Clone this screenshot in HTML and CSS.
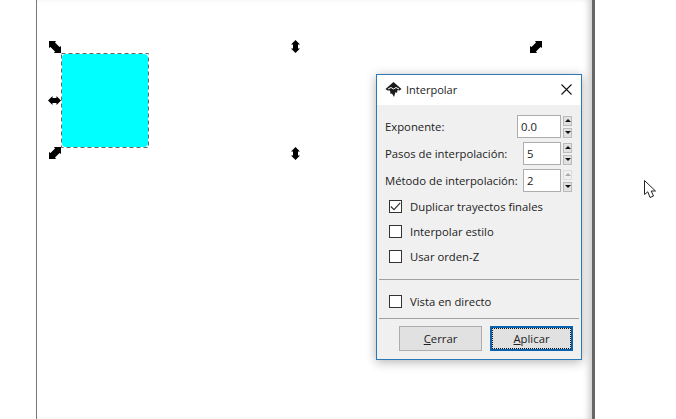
FILE: index.html
```html
<!DOCTYPE html>
<html lang="es">
<head>
    <meta charset="UTF-8">
    <meta name="viewport" content="width=device-width, initial-scale=1.0">
    <title>Interpolar</title>
    <link rel="stylesheet" href="styles.css">
</head>
<body>
    <main class="canvas">
        <div class="page"></div>

        <!-- Objeto seleccionado y tiradores -->
        <svg class="shape" width="88" height="95" viewBox="0 0 88 95">
            <rect class="shape-fill" x="1" y="1" width="86" height="93" rx="4"/>
            <rect class="shape-dash" x=".5" y=".5" width="87" height="94"/>
        </svg>
        <svg class="handle h-nw" width="12" height="12" viewBox="0 0 12 12"><path d="M0 0H7L6 1.500 10.500 6 12 5V12H5L6 10.500 1.500 6 0 7z"/></svg>
        <svg class="handle h-sw" width="12" height="12" viewBox="0 0 12 12"><path d="M12 0V7L10.500 6 6 10.500 7 12H0V5L1.500 6 6 1.500 5 0z"/></svg>
        <svg class="handle h-ne" width="12" height="12" viewBox="0 0 12 12"><path d="M12 0V7L10.500 6 6 10.500 7 12H0V5L1.500 6 6 1.500 5 0z"/></svg>
        <svg class="handle h-w" width="13" height="9" viewBox="0 0 13 9"><path d="M0 4.500 4.500 0V2H8.500V0L13 4.500 8.500 9V7H4.500V9z"/></svg>
        <svg class="handle h-n" width="9" height="13" viewBox="0 0 9 13"><path d="M4.500 0 9 4.500H7V8.500H9L4.500 13 0 8.500H2V4.500H0z"/></svg>
        <svg class="handle h-s" width="9" height="13" viewBox="0 0 9 13"><path d="M4.500 0 9 4.500H7V8.500H9L4.500 13 0 8.500H2V4.500H0z"/></svg>

        <!-- Puntero del ratón -->
        <svg class="cursor" width="13" height="19" viewBox="0 0 13 19"><path d="M.5 .5V14.500L3.800 11.800 6 17.500 9.500 16 7.200 11H11.500z"/></svg>

        <!-- Diálogo -->
        <section class="dialog">
            <header class="titlebar">
                <svg class="app-icon" width="17" height="15" viewBox="0 0 17 15">
                    <path class="ink" d="M8.500 0 16.500 7 14.500 8.500 12.500 8 12 11 10.500 10 9 15 7 11.500 5.500 12 5 8.500 2.500 8.500 .5 7z"/>
                    <path class="snow" d="M3 7 6 5.500 8.500 7 11 5.500 14 7"/>
                </svg>
                <span class="title">Interpolar</span>
                <svg class="close" width="11" height="11" viewBox="0 0 11 11"><path d="M.5 .5 10.500 10.500M10.500 .5 .5 10.500"/></svg>
            </header>
            <div class="body">
                <div class="field">
                    <label>Exponente:</label>
                    <div class="spin">
                        <input class="entry wide" type="text" value="0.0">
                        <div class="arrows">
                            <span class="arrow up"></span>
                            <span class="arrow down"></span>
                        </div>
                    </div>
                </div>
                <div class="field">
                    <label>Pasos de interpolación:</label>
                    <div class="spin">
                        <input class="entry" type="text" value="5">
                        <div class="arrows">
                            <span class="arrow up"></span>
                            <span class="arrow down"></span>
                        </div>
                    </div>
                </div>
                <div class="field">
                    <label>Método de interpolación:</label>
                    <div class="spin">
                        <input class="entry" type="text" value="2">
                        <div class="arrows">
                            <span class="arrow up off"></span>
                            <span class="arrow down"></span>
                        </div>
                    </div>
                </div>

                <div class="check first">
                    <span class="box"><svg width="11" height="9" viewBox="0 0 11 9"><path d="M.8 4.500 4 7.600 10.200 .8"/></svg></span>
                    <span>Duplicar trayectos finales</span>
                </div>
                <div class="check"><span class="box"></span><span>Interpolar estilo</span></div>
                <div class="check"><span class="box"></span><span>Usar orden-Z</span></div>

                <hr class="rule rule-top">
                <div class="check live"><span class="box"></span><span>Vista en directo</span></div>
                <hr class="rule rule-bottom">

                <div class="buttons">
                    <button class="btn" type="button"><u>C</u>errar</button>
                    <button class="btn default" type="button"><u>A</u>plicar</button>
                </div>
            </div>
        </section>
    </main>
</body>
</html>
```

FILE: styles.css
```css
html, body {
    margin: 0;
    padding: 0;
    height: 100%;
    background-color: #fff;
    overflow: hidden;
}
.canvas {
    position: relative;
    width: 676px;
    height: 419px;
    font-family: "Open Sans", "Noto Sans", sans-serif;
    color: #222;
}
.page {
    position: absolute;
    left: 36px;
    top: 0;
    width: 555px;
    height: 419px;
    border-left: 1px solid #777;
    border-right: 3px solid #666;
    box-shadow: inset -6px 0 6px -3px #ccc;
}
.shape {
    position: absolute;
    left: 61px;
    top: 53px;
}
.shape-fill {
    fill: #0ff;
}
.shape-dash {
    fill: none;
    stroke: #666;
    stroke-width: 1;
    stroke-dasharray: 4 3;
}
.handle {
    position: absolute;
    fill: #000;
}
.h-nw { left: 49px; top: 41px; }
.h-sw { left: 49px; top: 147px; }
.h-ne { left: 530px; top: 41px; }
.h-w { left: 48px; top: 96px; }
.h-n { left: 291px; top: 40px; }
.h-s { left: 291px; top: 147px; }
.cursor {
    position: absolute;
    left: 644px;
    top: 180px;
    fill: #fff;
    stroke: #222;
    stroke-width: 1;
}

/* dialogo */
.dialog {
    position: absolute;
    left: 376px;
    top: 74px;
    width: 204px;
    height: 284px;
    background-color: #f0f0f0;
    border: 1px solid #2b78b8;
    box-shadow: 0 2px 10px rgba(0, 0, 0, 0.3);
    font-size: 11.3px;
}
.titlebar {
    display: flex;
    align-items: center;
    height: 29px;
    padding: 0 9px 1px 8px;
    background-color: #fff;
}
.app-icon .ink { fill: #1a1a1a; }
.app-icon .snow { fill: none; stroke: #fff; stroke-width: 1; }
.title {
    flex: 1;
    margin-left: 4px;
    font-size: 11px;
}
.close {
    fill: none;
    stroke: #111;
    stroke-width: 1.1;
}
.body {
    padding: 10px 8px 0 8px;
}
.field {
    display: flex;
    align-items: center;
    justify-content: space-between;
    height: 23px;
    margin-bottom: 4px;
}
.spin {
    display: flex;
    align-items: center;
}
.entry {
    box-sizing: border-box;
    width: 38px;
    height: 23px;
    padding: 0 3px;
    border: 1px solid #adadad;
    background-color: #fff;
    font: inherit;
    color: #222;
}
.entry.wide {
    width: 44px;
}
.arrows {
    display: flex;
    flex-direction: column;
    gap: 2px;
    margin-left: 2px;
    margin-right: 1px;
}
.arrow {
    box-sizing: border-box;
    display: flex;
    align-items: center;
    justify-content: center;
    width: 9px;
    height: 10px;
    background-color: #e1e1e1;
    border: 1px solid #bbb;
}
.arrow::before {
    content: "";
    border-left: 3px solid transparent;
    border-right: 3px solid transparent;
}
.arrow.up::before { border-bottom: 3px solid #111; }
.arrow.down::before { border-top: 3px solid #111; }
.arrow.off { background-color: #f0f0f0; border-color: #ddd; }
.arrow.off::before { border-bottom-color: #aaa; }

.check {
    display: flex;
    align-items: center;
    height: 25px;
    padding-left: 4px;
}
.check.first {
    margin-top: -2px;
}
.box {
    box-sizing: border-box;
    display: flex;
    align-items: center;
    justify-content: center;
    width: 13px;
    height: 13px;
    margin-right: 8px;
    background-color: #fff;
    border: 1px solid #333;
}
.box svg {
    fill: none;
    stroke: #333;
    stroke-width: 1.2;
}
.rule {
    margin: 0 -6px;
    border: 0;
    border-top: 1px solid #a0a0a0;
}
.rule-top { margin-top: 10px; }
.rule-bottom { margin-top: 4px; }
.live { margin-top: 9px; }
.buttons {
    display: flex;
    justify-content: flex-end;
    gap: 8px;
    margin-top: 7px;
}
.btn {
    box-sizing: border-box;
    width: 83px;
    height: 25px;
    padding: 0;
    background-color: #e1e1e1;
    border: 1px solid #adadad;
    font: inherit;
    color: #222;
}
.btn.default {
    border: 2px solid #0b63ad;
    outline: 1px dotted #111;
    outline-offset: -3px;
}
```
